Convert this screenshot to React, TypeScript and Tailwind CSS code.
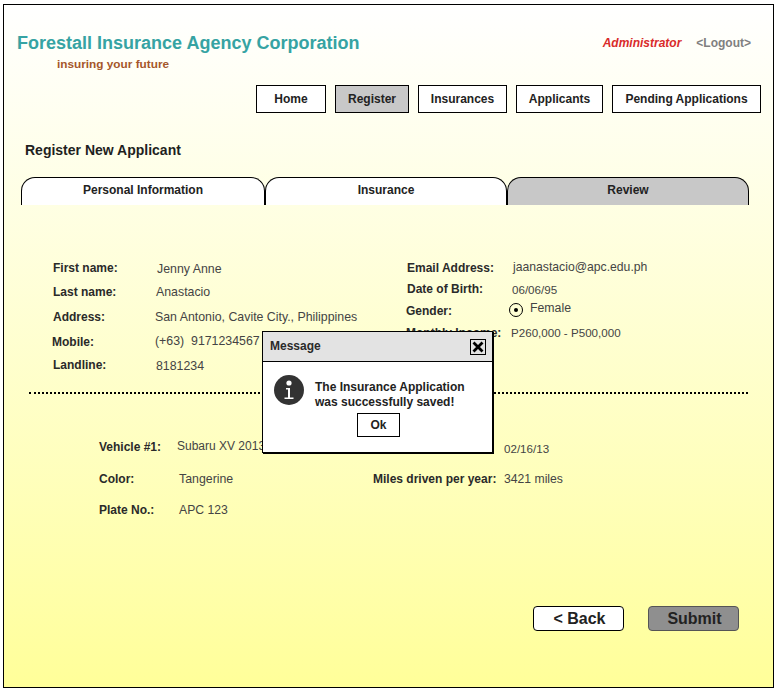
import React from 'react';

const navItems = [
  { label: 'Home', className: 'w-[70px] bg-white' },
  { label: 'Register', className: 'w-[74px] bg-[#c8c8c8]' },
  { label: 'Insurances', className: 'w-[89px] bg-white' },
  { label: 'Applicants', className: 'w-[87px] bg-white' },
  { label: 'Pending Applications', className: 'w-[149px] bg-white' },
];

const leftFields = [
  { label: 'First name:', value: 'Jenny Anne', labelClass: 'ml-0', valueClass: 'ml-[104px] mt-[2px]' },
  { label: 'Last name:', value: 'Anastacio', labelClass: 'ml-0 -mt-[2px]', valueClass: 'ml-[103px]' },
  { label: 'Address:', value: 'San Antonio, Cavite City., Philippines', labelClass: 'ml-0', valueClass: 'ml-[102px]' },
  { label: 'Mobile:', value: '(+63)  9171234567', labelClass: '-ml-[1px]', valueClass: 'ml-[102px]' },
  { label: 'Landline:', value: '8181234', labelClass: 'ml-0 -mt-[2px]', valueClass: 'ml-[103px]' },
];

const Label = ({ children, className = '' }: { children: React.ReactNode; className?: string }) => (
  <span className={`absolute left-0 whitespace-nowrap text-xs font-bold text-[#2a2a2a] ${className}`}>{children}</span>
);

const Value = ({ children, className = '' }: { children: React.ReactNode; className?: string }) => (
  <span className={`whitespace-pre text-[#444] ${className}`}>{children}</span>
);

export default function App() {
  return (
    <div className="h-[692px] w-[778px] bg-white pl-[3px] pt-[4px] font-['Liberation_Sans',Arial,sans-serif]">
      <div className="relative h-[684px] w-[771px] border border-black bg-gradient-to-b from-white to-[#ffff99]">
        {/* header */}
        <div className="flex h-[80px] justify-between pl-[13px] pr-[22px] pt-[27px]">
          <div>
            <div className="text-lg leading-[22px] font-bold text-[#36a3a3]">Forestall Insurance Agency Corporation</div>
            <div className="ml-[40px] mt-[2px] text-[11.8px] font-bold text-[#a5562a]">insuring your future</div>
          </div>
          <div className="flex h-[22px] items-center gap-[15px] text-xs font-bold">
            <span className="italic text-[#d92b2b]">Administrator</span>
            <span className="text-[#808080]">&lt;Logout&gt;</span>
          </div>
        </div>

        {/* nav */}
        <div className="flex justify-end gap-[9px] pr-[12px]">
          {navItems.map((item) => (
            <div
              key={item.label}
              className={`flex h-[28px] items-center justify-center border border-black text-xs font-bold text-[#222] ${item.className}`}
            >
              {item.label}
            </div>
          ))}
        </div>

        <h1 className="ml-[21px] mt-[28px] text-sm leading-[18px] font-bold text-[#1f1f1f]">Register New Applicant</h1>

        {/* tabs */}
        <div className="ml-[17px] mt-[18px] flex">
          <div className="h-[28px] w-[244px] rounded-t-[14px] border border-b-0 border-black bg-white pt-[4px] text-center text-xs font-bold text-[#222]">
            Personal Information
          </div>
          <div className="h-[28px] w-[242px] rounded-t-[14px] border border-b-0 border-black bg-white pt-[4px] text-center text-xs font-bold text-[#222]">
            Insurance
          </div>
          <div className="h-[28px] w-[242px] rounded-t-[14px] border border-b-0 border-black bg-[#c8c8c8] pt-[4px] text-center text-xs font-bold text-[#222]">
            Review
          </div>
        </div>

        {/* applicant details */}
        <div className="mt-[51px] flex h-[136px]">
          <div className="ml-[49px] w-[354px]">
            {leftFields.map((field) => (
              <div key={field.label} className="relative flex h-[24.5px] items-center">
                <Label className={field.labelClass}>{field.label}</Label>
                <Value className={`text-[12.35px] ${field.valueClass}`}>{field.value}</Value>
              </div>
            ))}
          </div>
          <div className="relative pt-[1px]">
            <div className="relative flex h-[21px] items-center">
              <Label>Email Address:</Label>
              <Value className="ml-[106px] text-[12.2px]">jaanastacio@apc.edu.ph</Value>
            </div>
            <div className="relative flex h-[22px] items-center">
              <Label>Date of Birth:</Label>
              <Value className="ml-[105px] mt-[2px] text-[11.6px]">06/06/95</Value>
            </div>
            <div className="relative flex h-[21px] items-center">
              <Label className="-ml-[1px]">Gender:</Label>
              <span className="-mt-[2px] ml-[102px] flex h-[14px] w-[14px] items-center justify-center rounded-full border border-black bg-transparent">
                <span className="h-[4px] w-[4px] rounded-full bg-black" />
              </span>
              <Value className="-mt-[4px] ml-[7px] text-[12.3px]">Female</Value>
            </div>
            <div className="relative flex h-[21px] items-center">
              <Label className="-ml-[1px] mt-[2px]">Monthly Income:</Label>
              <Value className="ml-[104px] mt-[2px] text-[11.6px]">P260,000 - P500,000</Value>
            </div>
          </div>
        </div>

        <div className="ml-[25px] w-[719px] border-t-2 border-dotted border-black" />

        {/* vehicle details */}
        <div className="ml-[95px] mt-[37px] w-[480px] text-xs">
          <div className="relative flex h-[32px] items-center pb-[1px]">
            <Label>Vehicle #1:</Label>
            <Value className="-mt-[2px] ml-[78px] text-xs">Subaru XV 2013</Value>
            <span className="absolute left-[274px] whitespace-nowrap font-bold text-[#2a2a2a]">Date Purchased:</span>
            <Value className="absolute left-[405px] mt-[4px] text-[11.6px]">02/16/13</Value>
          </div>
          <div className="relative flex h-[31px] items-center">
            <Label>Color:</Label>
            <Value className="ml-[80px] mt-[2px] text-[12.35px]">Tangerine</Value>
            <span className="absolute left-[274px] whitespace-nowrap font-bold text-[#2a2a2a]">Miles driven per year:</span>
            <Value className="absolute left-[405px] mt-[2px] text-[12.2px]">3421 miles</Value>
          </div>
          <div className="relative flex h-[31px] items-center">
            <Label>Plate No.:</Label>
            <Value className="ml-[80px] mt-[2px] text-[12.2px]">APC 123</Value>
          </div>
        </div>

        {/* footer buttons */}
        <div className="mt-[81px] flex justify-end gap-[24px] pr-[34px]">
          <div className="flex h-[25px] w-[91px] items-center justify-center rounded-[4px] border border-black bg-white pl-[2px] text-base font-bold text-[#222]">
            &lt; Back
          </div>
          <div className="flex h-[25px] w-[91px] items-center justify-center rounded-[4px] border border-[#555] bg-[#8f8f8f] pl-[2px] text-base font-bold text-[#222]">
            Submit
          </div>
        </div>

        {/* message dialog */}
        <div className="absolute left-[258px] top-[326px] h-[122px] w-[231px] border border-black bg-white shadow-[1px_1px_0_#000]">
          <div className="flex h-[30px] items-center justify-between border-b border-black bg-[#e3e3e3] pl-[7px] pr-[6px]">
            <span className="mb-[2px] text-xs font-bold text-[#2a2a2a]">Message</span>
            <span className="flex h-[16px] w-[16px] items-center justify-center border border-black">
              <svg width="14" height="14" viewBox="0 0 14 14">
                <path d="M2.5 2.5 L11.5 11.5 M11.5 2.5 L2.5 11.5" stroke="#000" strokeWidth="2.8" fill="none" />
              </svg>
            </span>
          </div>
          <div className="flex pl-[11px] pt-[13px]">
            <svg width="30" height="30" viewBox="0 0 30 30" className="shrink-0">
              <circle cx="15" cy="15" r="15" fill="#333" />
              <circle cx="15" cy="8" r="2.6" fill="#fff" />
              <path d="M12 13 H16 V22.5 H19.5 V24 H10.5 V22.5 H14 V14.5 H12 Z" fill="#fff" />
            </svg>
            <div className="ml-[11px] mt-[5px] text-xs leading-[15px] font-bold text-[#222]">
              The Insurance Application
              <br />
              was successfully saved!
            </div>
          </div>
          <div className="ml-[94px] mt-[3px] flex h-[24px] w-[43px] items-center justify-center border border-black text-xs font-bold text-[#222]">
            Ok
          </div>
        </div>
      </div>
    </div>
  );
}
